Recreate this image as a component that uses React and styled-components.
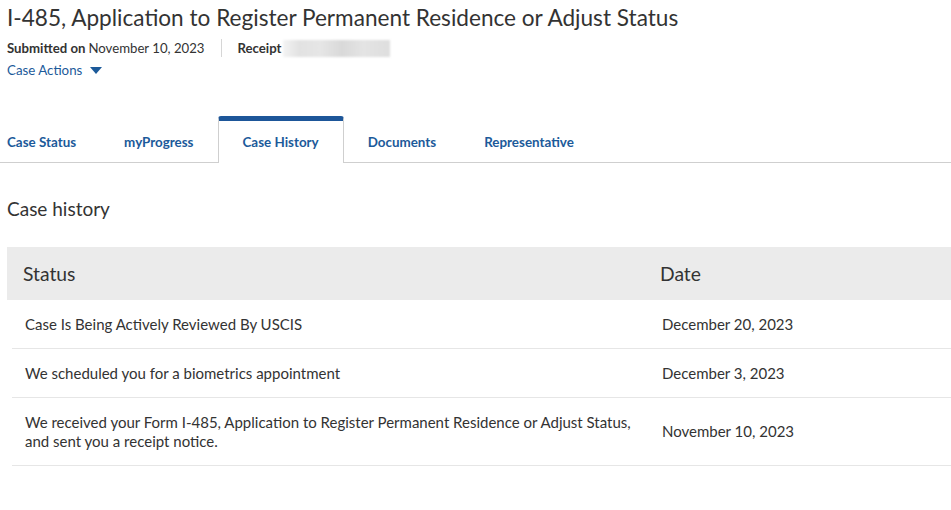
import React from "react";
import styled, { createGlobalStyle } from "styled-components";

const GlobalStyle = createGlobalStyle`
   body {
      margin: 0;
      background: #fff;
      font-family: Lato, "Noto Sans", sans-serif;
      color: #333;
   }
`;

const Page = styled("div")`
   width: 951px;
   overflow: hidden;
`;

const Header = styled("div")`
   padding: 4px 0 0 7px;
`;

const Title = styled("h1")`
   margin: 0;
   font-size: 22.6px;
   font-weight: 400;
   line-height: 28px;
   color: #333;
`;

const MetaRow = styled("div")`
   display: flex;
   align-items: center;
   margin-top: 7px;
   font-size: 13.2px;
   line-height: 18px;
   color: #333;
`;

const MetaItem = styled("span")`
   display: flex;
   align-items: center;
   padding-right: ${(p) => (p.$divider ? "16px" : "0")};
   margin-right: ${(p) => (p.$divider ? "16px" : "0")};
   border-right: ${(p) => (p.$divider ? "1px solid #d6d6d6" : "none")};
   b {
      font-weight: 700;
      margin-right: 3px;
   }
`;

const Blurred = styled("span")`
   display: inline-block;
   width: 107px;
   height: 17px;
   margin-left: -2px;
   background: linear-gradient(
      90deg,
      #f4f4f4 0%,
      #e2e2e2 15%,
      #e6e6e6 35%,
      #d9d9d9 55%,
      #e4e4e4 75%,
      #dedede 100%
   );
   filter: blur(1px);
`;

const ActionsLink = styled("a")`
   display: inline-flex;
   align-items: center;
   gap: 8px;
   margin-top: 4px;
   font-size: 13.3px;
   line-height: 18px;
   color: #1c5a9a;
   text-decoration: none;
`;

const Caret = styled("span")`
   width: 0;
   height: 0;
   border-left: 6px solid transparent;
   border-right: 6px solid transparent;
   border-top: 7px solid #1c5a9a;
`;

const TabBar = styled("div")`
   display: flex;
   align-items: flex-end;
   margin-top: 37px;
   border-bottom: 1px solid #cfcfcf;
   height: 46px;
`;

const Tab = styled("div")`
   box-sizing: border-box;
   padding: ${(p) => (p.$active ? "13px 24px 13px" : "0 24px 12px")};
   font-size: 13.4px;
   font-weight: 700;
   color: #1c5a9a;
   line-height: 16px;
   white-space: nowrap;
   background: #fff;
   border-top: ${(p) => (p.$active ? "5px solid #1d5699" : "none")};
   border-left: ${(p) => (p.$active ? "1px solid #cfcfcf" : "none")};
   border-right: ${(p) => (p.$active ? "1px solid #cfcfcf" : "none")};
   border-radius: ${(p) => (p.$active ? "3px 3px 0 0" : "0")};
   margin-bottom: ${(p) => (p.$active ? "-1px" : "0")};
   height: ${(p) => (p.$active ? "47px" : "auto")};
   &:first-child {
      padding-left: 7px;
   }
`;

const Section = styled("div")`
   padding: 34px 0 0 7px;
`;

const SectionTitle = styled("h2")`
   margin: 0;
   font-size: 19px;
   font-weight: 400;
   line-height: 24px;
   color: #333;
`;

const Table = styled("div")`
   margin: 26px 0 0 7px;
`;

const HeadRow = styled("div")`
   display: grid;
   grid-template-columns: 637px 1fr;
   align-items: center;
   height: 53px;
   background: #ebebeb;
   font-size: 19.3px;
   color: #333;
   div:first-child {
      padding-left: 16px;
   }
   div:last-child {
      padding-left: 16px;
   }
`;

const Row = styled("div")`
   display: grid;
   grid-template-columns: 637px 1fr;
   align-items: center;
   margin-left: 5px;
   min-height: 48px;
   border-bottom: 1px solid #e6e6e6;
   font-size: 15px;
   line-height: 19px;
   color: #333;
   div:first-child {
      padding: 15px 0 14px 13px;
   }
   div:last-child {
      padding-left: 13px;
   }
`;

const rows = [
   {
      status: "Case Is Being Actively Reviewed By USCIS",
      date: "December 20, 2023",
   },
   {
      status: "We scheduled you for a biometrics appointment",
      date: "December 3, 2023",
   },
   {
      status:
         "We received your Form I-485, Application to Register Permanent Residence or Adjust Status, and sent you a receipt notice.",
      date: "November 10, 2023",
   },
];

const tabs = ["Case Status", "myProgress", "Case History", "Documents", "Representative"];

const App = () => {
   return (
      <>
         <GlobalStyle />
         <Page>
            <Header>
               <Title>
                  I-485, Application to Register Permanent Residence or Adjust Status
               </Title>
               <MetaRow>
                  <MetaItem $divider>
                     <b>Submitted on</b> November 10, 2023
                  </MetaItem>
                  <MetaItem>
                     <b>Receipt</b>
                     <Blurred />
                  </MetaItem>
               </MetaRow>
               <ActionsLink href="#">
                  Case Actions <Caret />
               </ActionsLink>
            </Header>
            <TabBar>
               {tabs.map((t) => (
                  <Tab key={t} $active={t === "Case History"}>
                     {t}
                  </Tab>
               ))}
            </TabBar>
            <Section>
               <SectionTitle>Case history</SectionTitle>
            </Section>
            <Table>
               <HeadRow>
                  <div>Status</div>
                  <div>Date</div>
               </HeadRow>
               {rows.map((r) => (
                  <Row key={r.date}>
                     <div>{r.status}</div>
                     <div>{r.date}</div>
                  </Row>
               ))}
            </Table>
         </Page>
      </>
   );
};

export default App;
